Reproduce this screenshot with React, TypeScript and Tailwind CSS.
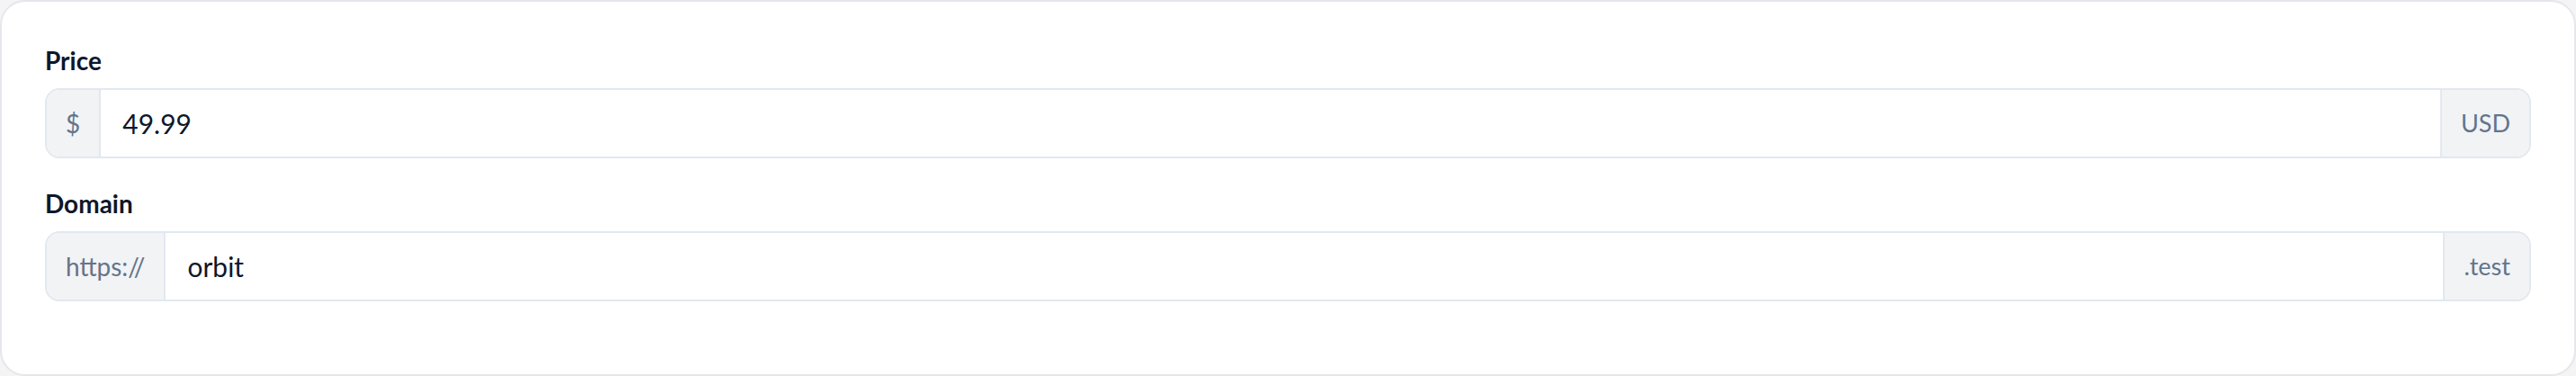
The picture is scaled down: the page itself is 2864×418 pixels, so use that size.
import React from "react";

const font = { fontFamily: "Lato, 'Noto Sans', sans-serif" };

function Field({ label, prefix, value, suffix }: { label: string; prefix: string; value: string; suffix: string }) {
  return (
    <div className="flex flex-col">
      <div className="text-[28px] leading-[40px] font-bold text-[#0f172a] mb-[11px]">{label}</div>
      <div className="flex h-[78px] rounded-[16px] border-2 border-[#e2e8f0] overflow-hidden">
        <div className="flex items-center px-[21px] bg-[#f1f3f5] border-r-2 border-[#e2e8f0] text-[28px] text-[#64748b]">{prefix}</div>
        <div className="flex flex-1 items-center px-[24px] bg-white text-[30px] text-[#0f172a]">{value}</div>
        <div className="flex items-center px-[21px] bg-[#f1f3f5] border-l-2 border-[#e2e8f0] text-[27px] text-[#64748b]">{suffix}</div>
      </div>
    </div>
  );
}

export default function App() {
  return (
    <div className="w-[2864px] h-[418px] bg-[#f4f4f5]" style={font}>
      <div className="h-full w-full rounded-[28px] border-2 border-[#e5e7eb] bg-white px-[48px] pt-[45px] flex flex-col gap-[30px]">
        <Field label="Price" prefix="$" value="49.99" suffix="USD" />
        <Field label="Domain" prefix="https://" value="orbit" suffix=".test" />
      </div>
    </div>
  );
}
